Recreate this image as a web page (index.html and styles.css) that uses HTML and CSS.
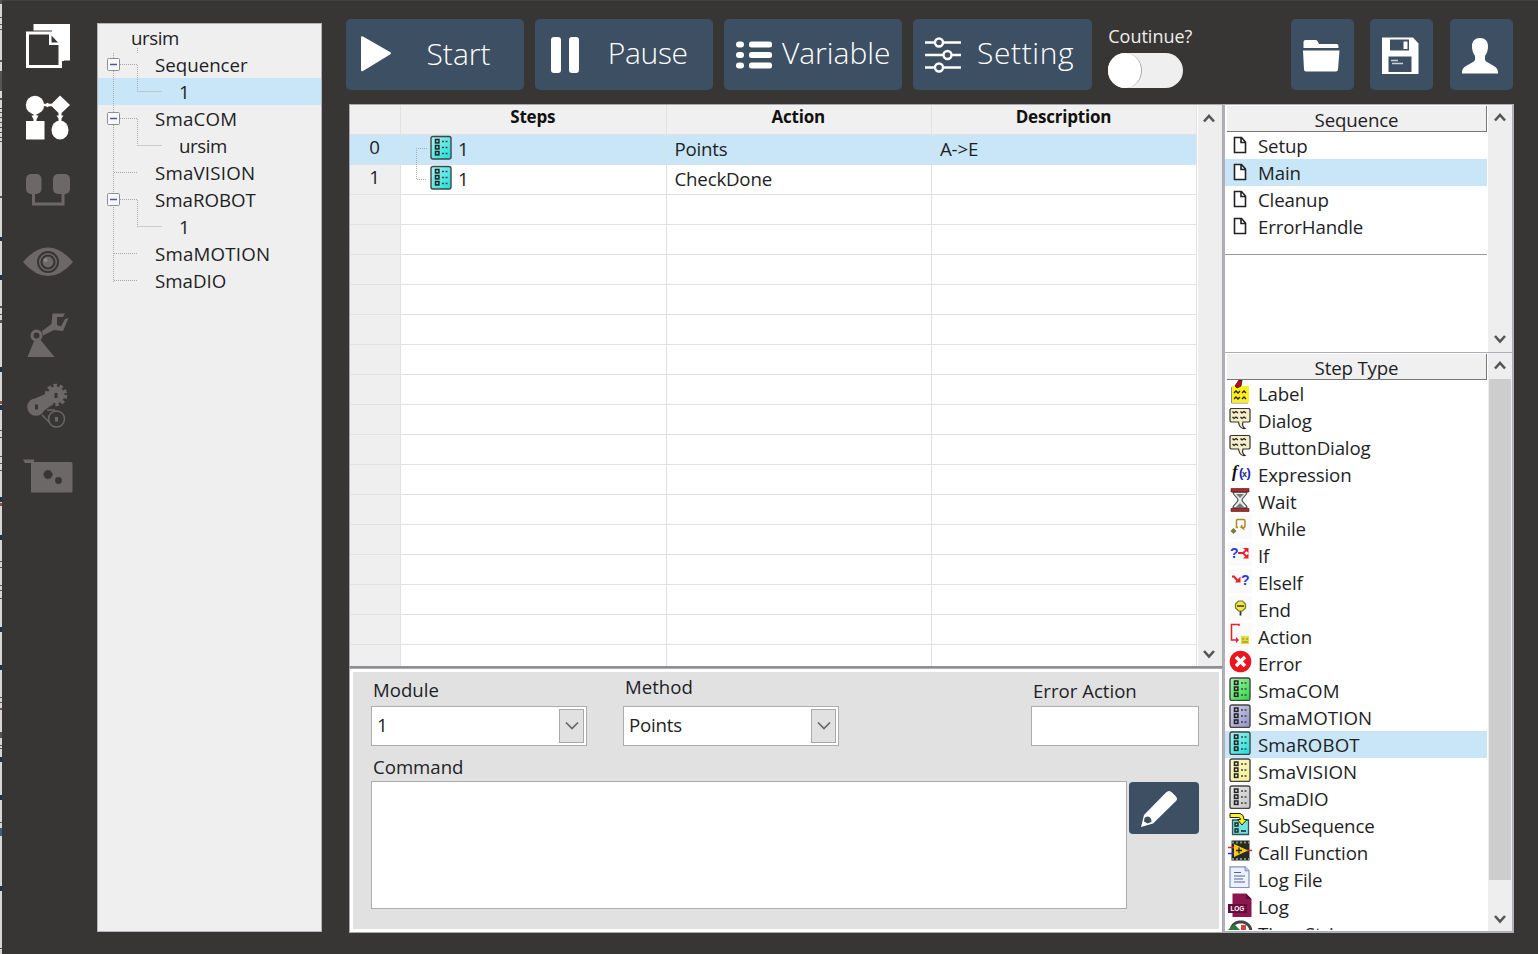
FILE: index.html
```html
<!DOCTYPE html>
<html lang="en">
<head>
<meta charset="utf-8">
<title>Sequencer</title>
<link rel="stylesheet" href="styles.css">
</head>
<body>
<svg class="defs" aria-hidden="true">
  <defs>
    <linearGradient id="shade" x1="0" y1="0" x2="1" y2="1"><stop offset="0" stop-color="#fff" stop-opacity=".6"/><stop offset=".9" stop-color="#fff" stop-opacity="0"/></linearGradient>
    <symbol id="module" viewBox="0 0 24 24">
      <rect x="2" y="1" width="20" height="22.500" rx="2" fill="currentColor"/>
      <rect x="2" y="1" width="20" height="22.500" rx="2" fill="url(#shade)" stroke="#444" stroke-width="1.400"/>
      <g fill="none" stroke="#222" stroke-width="1.500"><rect x="6.500" y="4" width="3.400" height="3.400"/><rect x="6.500" y="10" width="3.400" height="3.400"/><rect x="6.500" y="16" width="3.400" height="3.400"/></g>
      <path d="M13 6h6M13 12h6M13 18h6" stroke="#444" stroke-width="1.400" stroke-dasharray="2 1.500"/>
    </symbol>
    <symbol id="page" viewBox="0 0 24 24"><path d="M6.500 4.500h7l4 4.500v10.500h-11zM13 4.500v5h4.500" fill="#fff" stroke="#222" stroke-width="1.600"/></symbol>
    <symbol id="balloon" viewBox="0 0 24 24">
      <path d="M3 1.500h18l1 1v11.500l-1 1h-6c-1 2.500 0 5 2 6.500-4.500.5-6-3-6.500-6.500h-7.500l-1-1v-11.500z" fill="#f5eec9" stroke="#333" stroke-width="1.200"/>
      <path d="M4.500 4.500l1.500 1.500 2-1.500 2 1.500M12.500 4.500l1.500 1.500 2-1.500 2 1.500M4.500 10l1.500 1.500 2-1.500 2 1.500M12.500 10l1.500 1.500 2-1.500 2 1.500" fill="none" stroke="#222" stroke-width="1.300"/>
    </symbol>
    <symbol id="up" viewBox="0 0 12 10"><path d="M1 7.500l5-5.500 5 5.500" fill="none" stroke="#555" stroke-width="2.600"/></symbol>
    <symbol id="down" viewBox="0 0 12 10"><path d="M1 2l5 5.500 5-5.500" fill="none" stroke="#555" stroke-width="2.600"/></symbol>
    <symbol id="thin-down" viewBox="0 0 14 10"><path d="M1 1.500l6 6 6-6" fill="none" stroke="#666" stroke-width="1.700"/></symbol>
  </defs>
</svg>
<div class="app">
  <svg class="edge" viewBox="0 0 2 954">
    <rect width="2" height="954" fill="#d5d6d6"/>
    <path d="M1 0v4M1 17v1M1 24v1M1 29v1M1 60v2M1 71v20M1 98v2M1 108v1M1 112v1M1 117v1M1 122v1M1 127v1M1 132v1M1 137v1M1 141v1M1 196v2M1 306v2M1 314v1M1 320v3M1 430v1M1 437v1M1 456v1M1 463v1M1 470v1M1 561v1M1 567v1M1 585v1M1 590v1M1 598v1M1 697v1M1 702v1M1 732v6M1 745v1M1 748v1M1 822v1M1 948v1" stroke="#555" stroke-width="2"/>
    <path d="M1 237v4M1 275v5M1 367v5M1 405v5M1 497v5M1 535v5M1 627v5M1 665v5M1 757v5M1 795v5M1 886v5" stroke="#1c3349" stroke-width="2"/>
    <path d="M1 401v3M1 503v3M1 708v2" stroke="#8f4f3c" stroke-width="2"/>
    <path d="M1 828v8" stroke="#3e5e80" stroke-width="2"/>
  </svg>
  <nav class="rail">
    <svg viewBox="0 0 50 50"><path fill="#fff" d="M10.500 3H47v36.500h-6.500V18L32 9.500H10.500z"/><path fill="#fff" fill-rule="evenodd" d="M3 10.500h26v-1.500h4l8 8v23h-2v7H3zM6 13.500v30.500h29.500V24H26V13.500z"/><path fill="#383634" d="M28.500 14.500v7h6.500z"/></svg>
    <svg viewBox="0 0 50 50" fill="#fff"><circle cx="12" cy="12" r="9.200"/><path d="M37 2.500l10 9.500-10 9.500L27.500 12z"/><path d="M3 28h18.500v18.500H3z"/><ellipse cx="37" cy="37" rx="8.500" ry="9.500"/><path d="M20 10.800h3l1.500-1 1.500 1h3v2.500h-3l-1.500 1-1.500-1h-3zM10.500 20h3v2.500h2l-2 4v2h-3v-2l-2-4h2zM35.500 20h3v2.500h2l-2 3v3h-3v-3l-2-3h2z"/></svg>
    <svg viewBox="0 0 50 50" fill="#6b6867"><rect x="3" y="9" width="15.500" height="20" rx="5"/><rect x="30" y="9" width="17" height="20" rx="5"/><path d="M10.500 27v12h29.500V27" fill="none" stroke="#6b6867" stroke-width="3"/></svg>
    <svg viewBox="0 0 50 50"><path d="M0 25Q12 10.500 25 10.500T50 25Q38 39 25 39T0 25z" fill="#6b6867"/><circle cx="25" cy="25" r="10" fill="none" stroke="#383634" stroke-width="2"/><circle cx="25" cy="25" r="6.500" fill="#6b6867" stroke="#383634" stroke-width="2.200"/><circle cx="22.500" cy="23" r="2" fill="#8a8887"/></svg>
    <svg viewBox="0 0 50 50" fill="#6b6867"><path d="M4.500 48l7-17h6l14 17z"/><circle cx="13.500" cy="26.500" r="4.500" fill="#383634" stroke="#6b6867" stroke-width="3"/><path d="M19 22l9.500-7 1-10.500H42l-2 3.500h-6v8l4 1.500 4-7.500 3.500-1-5.500 13-9-1-11 5.500z"/></svg>
    <svg viewBox="0 0 50 50"><circle cx="33" cy="14" r="8.500" fill="#6b6867"/><circle cx="33" cy="14" r="9.500" fill="none" stroke="#6b6867" stroke-width="3.500" stroke-dasharray="3.500 2.500"/><path d="M13 17L25 12l5 11-12 9z" fill="#6b6867"/><circle cx="13" cy="26" r="8.800" fill="#6b6867"/><path d="M33 12v5M13.500 23.500v5" stroke="#383634" stroke-width="3"/><circle cx="33.500" cy="38" r="8" fill="none" stroke="#6b6867" stroke-width="1.400"/><path d="M19 34l8 8M24 29h8" stroke="#6b6867" stroke-width="1.400"/><path d="M33.500 36v4.500" stroke="#6b6867" stroke-width="3"/></svg>
    <svg viewBox="0 0 50 50" fill="#6b6867"><path d="M0 6.500h11V9h37q1.500 0 1.500 1.500V38q0 1.500-1.500 1.500H8V10H2z"/><circle cx="25" cy="21.500" r="4.200" fill="#383634" stroke="#383634" stroke-dasharray="1.500 1.500"/><circle cx="35.500" cy="27.500" r="3.400" fill="#383634"/></svg>
  </nav>

  <section class="tree">
    <svg class="branches" viewBox="0 0 224 300" width="224" height="300">
      <path d="M16.500 29v229M40.500 24v5M23 40.500h17.500v27M40.500 67.500H65M23 94.500h17.500v27M40.500 121.500H65M17 148.500h24M23 175.500h17.500v27M40.500 202.500H65M17 229.500h24M17 256.500h24" fill="none" stroke="#a9a9a9" stroke-dasharray="1 1"/>
      <g fill="#f8f8fa" stroke="#8e8f96"><rect x="10.500" y="34.500" width="12" height="12" rx="1"/><rect x="10.500" y="88.500" width="12" height="12" rx="1"/><rect x="10.500" y="169.500" width="12" height="12" rx="1"/></g>
      <path d="M13 40.500h7M13 94.500h7M13 175.500h7" stroke="#4b5a92" stroke-width="1.300"/>
    </svg>
    <div class="node root">ursim</div>
    <div class="node">Sequencer</div>
    <div class="node leaf selected">1</div>
    <div class="node wide">SmaCOM</div>
    <div class="node leaf">ursim</div>
    <div class="node wide">SmaVISION</div>
    <div class="node">SmaROBOT</div>
    <div class="node leaf">1</div>
    <div class="node wide">SmaMOTION</div>
    <div class="node">SmaDIO</div>
  </section>

  <main class="main">
    <header class="toolbar">
      <button class="tool start"><svg viewBox="0 0 50 70"><path d="M15 18.500q0-2 2-1L44 33q2 1.200 0 2.500L17 52q-2 1-2-1z" fill="#fff"/></svg><span>Start</span></button>
      <button class="tool pause"><svg viewBox="0 0 50 70" fill="#fff"><rect x="16" y="18" width="10" height="36" rx="3"/><rect x="34" y="18" width="10" height="36" rx="3"/></svg><span>Pause</span></button>
      <button class="tool variable"><svg viewBox="0 0 50 70" fill="#fff"><rect x="12" y="22.500" width="8" height="6" rx="3"/><rect x="12" y="33" width="8" height="6" rx="3"/><rect x="12" y="43.500" width="8" height="6" rx="3"/><rect x="25" y="22.500" width="23" height="6" rx="2.500"/><rect x="25" y="33" width="23" height="6" rx="2.500"/><rect x="25" y="43.500" width="23" height="6" rx="2.500"/></svg><span>Variable</span></button>
      <button class="tool setting"><svg viewBox="0 0 50 70" fill="#3d4f63" stroke="#fff" stroke-width="2.400"><path d="M12 23.500h36M12 36h36M12 48.500h36"/><circle cx="26" cy="23.500" r="4"/><circle cx="34.500" cy="36" r="4"/><circle cx="26" cy="48.500" r="4"/></svg><span>Setting</span></button>
      <div class="continue"><label>Coutinue?</label><div class="toggle"><i></i></div></div>
      <div class="icons">
        <button><svg viewBox="0 0 63 70" fill="#fff"><path d="M12.500 28v-6q0-2 2-2h10q2 0 2.500 2l1 2h17.500q2 0 2 2v2z"/><path d="M12 30.500h36.500l-1.500 19q-.2 2-2 2H15q-2 0-2-2z"/></svg></button>
        <button><svg viewBox="0 0 63 70"><path d="M12 17.500h31l5.500 6V54H12z" fill="#fff"/><path d="M20 19.500h19v11H20z" fill="#3d4f63"/><path d="M33.500 21.500h4v7.500h-4z" fill="#fff"/><path d="M18.500 36.500h23V52h-23z" fill="#3d4f63"/><path d="M21 40.500h7M22 43.500h11" stroke="#ccd2d8" stroke-width="1.500"/></svg></button>
        <button><svg viewBox="0 0 63 70" fill="#fff"><path d="M30 18c5 0 8 3 8 8 0 4-1 7-3 10v4c2 4 13 5 13 12v1.500H12V52c0-7 11-8 13-12v-4c-2-3-3-6-3-10 0-5 3-8 8-8z"/></svg></button>
      </div>
    </header>

    <div class="workspace">
      <div class="left">
        <div class="grid-panel">
          <div class="grid">
            <div class="row head"><b></b><b>Steps</b><b>Action</b><b>Description</b></div>
            <div class="row selected"><i>0</i><div class="step"><svg><use href="#module"/></svg><span>1</span></div><div>Points</div><div>A-&gt;E</div></div>
            <div class="row"><i>1</i><div class="step"><svg><use href="#module"/></svg><span>1</span></div><div>CheckDone</div><div></div></div>
            <div class="row"><i></i><div></div><div></div><div></div></div>
            <div class="row"><i></i><div></div><div></div><div></div></div>
            <div class="row"><i></i><div></div><div></div><div></div></div>
            <div class="row"><i></i><div></div><div></div><div></div></div>
            <div class="row"><i></i><div></div><div></div><div></div></div>
            <div class="row"><i></i><div></div><div></div><div></div></div>
            <div class="row"><i></i><div></div><div></div><div></div></div>
            <div class="row"><i></i><div></div><div></div><div></div></div>
            <div class="row"><i></i><div></div><div></div><div></div></div>
            <div class="row"><i></i><div></div><div></div><div></div></div>
            <div class="row"><i></i><div></div><div></div><div></div></div>
            <div class="row"><i></i><div></div><div></div><div></div></div>
            <div class="row"><i></i><div></div><div></div><div></div></div>
            <div class="row"><i></i><div></div><div></div><div></div></div>
            <div class="row"><i></i><div></div><div></div><div></div></div>
            <div class="row"><i></i><div></div><div></div><div></div></div>
            <svg class="link" width="12" height="32"><path d="M11 .5H.5v31H11" fill="none" stroke="#aaa" stroke-dasharray="1 1"/></svg>
          </div>
          <div class="scroll"><svg><use href="#up"/></svg><svg><use href="#down"/></svg></div>
        </div>
        <div class="form">
          <div class="fields">
            <div class="field module"><label>Module</label><div class="box combo"><span>1</span><em><svg><use href="#thin-down"/></svg></em></div></div>
            <div class="field method"><label>Method</label><div class="box combo"><span>Points</span><em><svg><use href="#thin-down"/></svg></em></div></div>
            <div class="field error"><label>Error Action</label><div class="box"></div></div>
          </div>
          <label class="command-label">Command</label>
          <div class="command"><div class="area"></div><button class="edit"><svg viewBox="0 0 70 52"><path d="M12 45l3-12L37 10.500q3-3 6 0l3.500 3.500q3 3 0 5.500L24 41.500z" fill="#fff"/><path d="M15.500 36q2-2.500 5-1 2.500 2 2 5l-4 1.500-3.500-2z" fill="#3d4f63"/></svg></button></div>
        </div>
      </div>

      <aside class="right">
        <div class="list sequence">
          <div class="items">
            <h2>Sequence</h2>
            <div class="item"><svg><use href="#page"/></svg>Setup</div>
            <div class="item selected"><svg><use href="#page"/></svg>Main</div>
            <div class="item"><svg><use href="#page"/></svg>Cleanup</div>
            <div class="item"><svg><use href="#page"/></svg>ErrorHandle</div>
            <div class="rule"></div>
          </div>
          <div class="scroll"><svg><use href="#up"/></svg><svg><use href="#down"/></svg></div>
        </div>
        <div class="list types">
          <div class="items">
            <h2>Step Type</h2>
            <div class="item"><svg viewBox="0 0 24 24"><path d="M3.500 7v16H20" fill="none" stroke="#888"/><path d="M4 6h17v16.500H4z" fill="#ffef1f"/><path d="M6 13l2-2 2 2 2-2M14 13l2-2 2 2M6 19l2-2 2 2 2-2M14 19l2-2 2 2" fill="none" stroke="#222" stroke-width="1.300"/><path d="M9 8l-2-2 4-6h3l-1 6-2 1z" fill="#b00d18" stroke="#400" stroke-width=".8"/></svg>Label</div>
            <div class="item"><svg><use href="#balloon"/></svg>Dialog</div>
            <div class="item"><svg><use href="#balloon"/></svg>ButtonDialog</div>
            <div class="item"><svg viewBox="0 0 24 24"><text x="4" y="16" class="fx">f</text><text x="11" y="15.500" class="fp">(</text><text x="14" y="15.500" class="fs">x</text><text x="18.500" y="15.500" class="fp">)</text></svg>Expression</div>
            <div class="item"><svg viewBox="0 0 24 24"><path d="M5 4h14c0 4-5 5-5 8s5 4 5 8H5c0-4 5-5 5-8S5 8 5 4z" fill="#e8eeee" stroke="#555" stroke-width="1.300"/><path d="M8 6h8l-4 4zM7 20l5-5 5 5z" fill="#777"/><path d="M3 .5h18v3.500H3zM3 20.500h18v3H3z" fill="#a82b2b" stroke="#501010" stroke-width=".6"/></svg>Wait</div>
            <div class="item"><svg viewBox="0 0 24 24" class="tint"><path d="M10 12.500H8.500V5.500q0-1 1-1h6q1.500 0 1.500 1.500v5q0 1.500-1.500 1.500h-2l3 2M14 10l-1 2.500" fill="none" stroke="#b08a28" stroke-width="1.500"/><path d="M2.500 16l3-3 3 3-3 3z" fill="#7a7a30"/></svg>While</div>
            <div class="item"><svg viewBox="0 0 24 24" class="tint"><text x="2" y="16" class="q">?</text><path d="M10 11h5M19 7.500l-4 3.500 4 4" fill="none" stroke="#e8202a" stroke-width="1.800"/><path d="M15 6h5.500v5zM15 16.500h5.500v-5z" fill="#e8202a"/></svg>If</div>
            <div class="item"><svg viewBox="0 0 24 24" class="tint"><text x="13" y="15.500" class="q">?</text><path d="M4 7.500h2l3.500 4" fill="none" stroke="#e8202a" stroke-width="2"/><path d="M7 13.500l5.500 0 0-6z" fill="#e8202a"/></svg>Elself</div>
            <div class="item"><svg viewBox="0 0 24 24" class="tint"><path d="M12.500 12v7.500" stroke="#333" stroke-width="1.800"/><path d="M10.500 5h4l3 3v4l-3 3h-4l-3-3V8z" fill="#f0e83a" stroke="#777829" stroke-width="1.200"/><path d="M9 10h7" stroke="#555" stroke-width="1.800"/></svg>End</div>
            <div class="item"><svg viewBox="0 0 24 24" class="tint"><path d="M11 3V1.500H3.500V17H9" fill="none" stroke="#e8202a" stroke-width="1.500"/><path d="M8 14l3 3-3 3z" fill="#e8202a"/><path d="M13 13h8v8h-8z" fill="#e5dc37"/><path d="M14 16h2M18 16h2M14 19h6" stroke="#898429"/></svg>Action</div>
            <div class="item"><svg viewBox="0 0 24 24"><circle cx="12.500" cy="11.500" r="10.800" fill="#e91620"/><path d="M8 7l9 9M17 7l-9 9" stroke="#fff" stroke-width="3.500"/></svg>Error</div>
            <div class="item sma green"><svg><use href="#module"/></svg><span>SmaCOM</span></div>
            <div class="item sma violet"><svg><use href="#module"/></svg><span>SmaMOTION</span></div>
            <div class="item sma selected cyan"><svg><use href="#module"/></svg><span>SmaROBOT</span></div>
            <div class="item sma yellow"><svg><use href="#module"/></svg><span>SmaVISION</span></div>
            <div class="item gray"><svg><use href="#module"/></svg><span>SmaDIO</span></div>
            <div class="item"><svg viewBox="0 0 24 24"><path d="M4.500 8h16v14.500h-16z" fill="#72e3e3" stroke="#355" stroke-width="1.300"/><path d="M7 11h3v3H7zM7 17h3v3H7zM13 19h5" fill="none" stroke="#222" stroke-width="1.400"/><path d="M2 1.500h10q4 1 4 6h3l-5 5.500-4.500-5.500h3q0-2-2-2H2z" fill="#fff21c" stroke="#222"/></svg>SubSequence</div>
            <div class="item"><svg viewBox="0 0 24 24"><path d="M3.500 1.500h18v20h-18z" fill="#262b20"/><path d="M4 3.500h17M4 20h17" stroke="#888" stroke-width="2" stroke-dasharray="2 2"/><path d="M0 8.500h7M18 11.500h6" stroke="#e52323" stroke-width="1.500"/><path d="M0 14.500h7" stroke="#2530df" stroke-width="1.500"/><path d="M6 5l14 6.500L6 18z" fill="#f9cb18"/><path d="M8 11.500h6M11 8.500v6" stroke="#222" stroke-width="1.300"/></svg>Call Function</div>
            <div class="item"><svg viewBox="0 0 24 24"><path d="M2 .8h15l4 4V21.500H2z" fill="#edf1fd" stroke="#8290c4" stroke-width="1.200"/><path d="M17 .8v4h4" fill="#bdc7ec" stroke="#8290c4"/><path d="M6 6.500h7M6 10h11M6 13h9M6 16h11" stroke="#5364a0" stroke-width="1.200"/></svg>Log File</div>
            <div class="item"><svg viewBox="0 0 24 24"><path d="M4.500.5H18l5.500 5.500v18h-19z" fill="#8d164f"/><path d="M18 .5v5.500h5.500z" fill="#5b0c32"/><path d="M0 11h19v9H0z" fill="#670b3a"/><text x="2.500" y="18" class="logtext">LOG</text></svg>Log</div>
            <div class="item"><svg viewBox="0 0 24 24"><path d="M3 10A9 9 0 0 1 11 2h4a10 10 0 0 1 8 10" fill="none" stroke="#444" stroke-width="3"/><path d="M0 10l6-6 6 6z" fill="#287b3b"/><path d="M13 5h5v5h-5z" fill="#d34343"/></svg>Time String</div>
          </div>
          <div class="scroll"><svg><use href="#up"/></svg><div class="thumb"></div><svg><use href="#down"/></svg></div>
        </div>
      </aside>
    </div>
  </main>
</div>
</body>
</html>
```
FILE: styles.css
```css
* { box-sizing: border-box; }
body {
  margin: 0;
  background: #383634;
  color: #1e1e26;
  font: 18.7px/27px "Open Sans", "Noto Sans", sans-serif;
}
button { border: 0; padding: 0; font: inherit; color: inherit; }
.defs { display: block; width: 0; height: 0; position: absolute; }
.app { display: flex; width: 1538px; height: 954px; overflow: hidden; box-shadow: inset 0 1px #444240; }
.edge { width: 2px; height: 954px; flex: none; }

.rail { width: 95px; flex: none; padding: 10px 0 0 21px; display: flex; flex-direction: column; }
.rail svg { width: 50px; height: 50px; margin: 11px 0; flex: none; }

.tree {
  position: relative;
  width: 225px;
  height: 909px;
  margin-top: 23px;
  flex: none;
  background: #efefef;
  border: 1px solid #b4b4b8;
}
.branches { position: absolute; left: -1px; top: 0; }
.node { height: 27px; padding-left: 57px; white-space: nowrap; }
.node.root { padding-left: 33px; }
.node.leaf { padding-left: 81px; }
.node.wide { letter-spacing: .2px; }
.node.root, .node.leaf { letter-spacing: -.4px; }
.selected { background: #c8e6f7; }

.main { margin-left: 27px; width: 1165px; flex: none; display: flex; flex-direction: column; }
.toolbar { display: flex; height: 104px; padding-top: 19px; margin-left: -3.500px; }
.tool {
  display: flex;
  width: 178.500px;
  height: 71px;
  margin-right: 10.700px;
  flex: none;
  border-radius: 5px;
  background: #3d4f63;
  color: #fff;
  font-size: 30px;
  font-weight: 300;
  line-height: 67px;
  white-space: nowrap;
}
.tool svg { width: 50px; height: 70px; flex: none; }
.start span { margin-left: 31px; line-height: 69px; }
.pause span { margin-left: 23px; letter-spacing: -.3px; }
.variable span { margin-left: 8px; }
.setting span { margin-left: 14px; letter-spacing: .6px; }
.continue { width: 90px; margin-left: 6px; color: #eee; font-size: 18px; line-height: 27px; padding-top: 4px; }
.continue label { display: block; height: 29.500px; white-space: nowrap; }
.toggle { width: 75px; height: 35px; border-radius: 18px; background: #efefef; }
.toggle i { display: block; width: 34px; height: 35px; border-radius: 18px; background: #fff; border-right: 1px solid #aaa; }
.icons { display: flex; gap: 16.500px; margin-left: 92.500px; }
.icons button { width: 63px; height: 71px; border-radius: 5px; background: #3d4f63; flex: none; }
.icons svg { display: block; width: 63px; height: 70px; }

.workspace { display: flex; height: 829px; }
.left { width: 874px; flex: none; }
.grid-panel {
  display: flex;
  height: 564px;
  background: #fff;
  border: 1px solid #a8a8ae;
  border-bottom: 2px solid #8e8e94;
  overflow: hidden;
}
.grid { position: relative; width: 847px; flex: none; }
.row { display: grid; grid-template-columns: 51px 265.500px 265.500px 265px; height: 30px; line-height: 28px; }
.row > * { border-right: 1px solid #e2e2e2; border-bottom: 1px solid #e2e2e2; padding-left: 8px; letter-spacing: -.2px; }
.row > i { background: #efefef; font-style: normal; text-align: center; padding: 0; padding-right: 1px; line-height: 24px; }
.row.selected > * { background: #c8e6f7; border-color: #d3e4ed; }
.row:last-of-type > * { border-bottom: 0; }
.row.head > b { background: #f0f0f0; text-align: center; font-size: 17px; line-height: 24px; padding: 0 1px 0 0; color: #111; }
.row > .step { display: flex; padding-left: 28px; }
.step svg { width: 24px; height: 25px; color: #27e1dc; }
.step span { margin-left: 5px; }
.link { position: absolute; left: 66px; top: 43px; }
.scroll {
  width: 24px;
  margin-left: 1px;
  padding: 8px 0;
  background: #eeeeee;
  display: flex;
  flex-direction: column;
  justify-content: space-between;
  align-items: center;
  flex: none;
}
.scroll svg { width: 12px; height: 10px; flex: none; }
.grid-panel .scroll { padding: 9px 2px 7px 0; }

.form { height: 265px; background: #e1e1e1; border: 4px solid #fff; outline: 1px solid #a8a8ae; outline-offset: -1px; padding: 3px 18px; }
.form label { display: block; height: 31px; font-size: 18.600px; padding-left: 2px; white-space: nowrap; }
.fields { display: flex; }
.field { width: 216px; }
.method { margin-left: 36px; }
.error { width: 168px; margin-left: 192px; }
.form .module label { line-height: 29px; }
.form .method label { line-height: 24px; }
.form .error label { line-height: 32px; }
.box, .area { background: #fff; border: 1px solid #adadad; }
.box { height: 40px; }
.combo { display: flex; justify-content: space-between; padding: 2px 2px 2px 5px; line-height: 31px; letter-spacing: -.2px; }
.combo em { width: 25px; height: 34px; background: #e1e1e1; border: 1px solid #a8a8a8; display: flex; align-items: center; justify-content: center; }
.combo em svg { width: 14px; height: 10px; }
.form .command-label { height: 35px; line-height: 41px; }
.command { display: flex; gap: 2px; }
.area { width: 756px; height: 128px; }
.edit { width: 70px; height: 52px; margin-top: 1px; border-radius: 4px; background: #3d4f63; }
.edit svg { display: block; width: 70px; height: 52px; }

.right { width: 291px; border: 2px solid #b0b0b8; border-top-width: 1px; background: #fff; }
.list { display: flex; overflow: hidden; }
.sequence { height: 248px; border-bottom: 1px solid #aeaeb6; }
.types { height: 578px; }
.items { width: 262px; flex: none; letter-spacing: -.15px; }
.types .items { height: 577px; overflow: hidden; }
.list h2 { margin: 1px 0 0 2px; height: 26px; border-right: 1px solid #777; border-bottom: 1px solid #777; background: #f0f0f0; font-size: inherit; font-weight: 400; text-align: center; line-height: 27px; }
.item { display: flex; height: 27px; padding-left: 3px; white-space: nowrap; line-height: 28px; }
.item > svg { width: 24px; height: 24px; margin-right: 6px; flex: none; }
.sequence .item > svg { margin-top: 1px; }
.sma { letter-spacing: .1px; }
.rule { height: 15px; border-bottom: 1px solid #999; }
.types .scroll { justify-content: flex-start; }
.thumb { width: 22px; height: 501px; margin: 8px 0 34px; background: #cdcdcd; flex: none; }
.tint { background: #fafafa; }
.green svg { color: #35dc49; }
.violet svg { color: #9696cc; }
.cyan svg { color: #27e1dc; }
.yellow svg { color: #f7f193; }
.gray svg { color: #c9c9c9; }
.fx { font: italic bold 17px "Liberation Serif", serif; fill: #111; }
.fp { font: bold 13px "Liberation Sans", sans-serif; fill: #2222cc; }
.fs { font: bold 9px "Liberation Sans", sans-serif; fill: #222266; }
.q { font: bold 14px "Liberation Sans", sans-serif; fill: #2b35d8; }
.logtext { font: bold 6.500px "Liberation Sans", sans-serif; fill: #fff; }
```
